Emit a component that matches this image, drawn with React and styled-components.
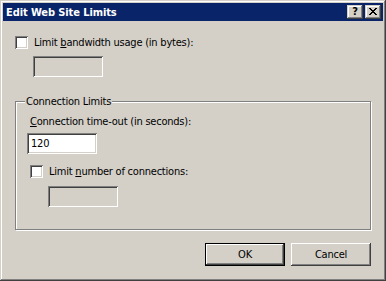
import React from 'react';
import styled, { createGlobalStyle } from 'styled-components';

const FACE = '#D4D0C8';

const Global = createGlobalStyle`
  html, body { margin: 0; padding: 0; background: ${FACE}; overflow: hidden; }
`;

const Window = styled.div`
  width: 386px;
  height: 281px;
  box-sizing: border-box;
  padding: 3px;
  background: ${FACE};
  box-shadow: inset -1px -1px #404040, inset 1px 1px ${FACE}, inset -2px -2px #808080, inset 2px 2px #ffffff;
  display: flex;
  flex-direction: column;
  font-family: "DejaVu Sans Condensed", "DejaVu Sans", sans-serif;
  font-size: 11px;
  letter-spacing: -0.22px;
  color: #000;
`;

const TitleBar = styled.div`
  height: 18px;
  background: #0A246A;
  display: flex;
  align-items: center;
  padding: 0 2px;
  color: #fff;
  font-weight: bold;
`;

const Title = styled.div`
  flex: 1;
  padding-left: 1px;
  line-height: 13px;
  letter-spacing: -0.1px;
`;

const CaptionButtons = styled.div`
  display: flex;
  gap: 2px;
`;

const CaptionButton = styled.div`
  width: 16px;
  height: 14px;
  box-sizing: border-box;
  background: ${FACE};
  box-shadow: inset -1px -1px #404040, inset 1px 1px ${FACE}, inset -2px -2px #808080, inset 2px 2px #ffffff;
  display: flex;
  align-items: center;
  justify-content: center;
  color: #000;
  font-weight: bold;
  font-size: 11px;
  line-height: 11px;
  letter-spacing: 0;
  padding-bottom: 1px;
`;

const Content = styled.div`
  flex: 1;
  display: flex;
  flex-direction: column;
  padding: 15px 12px 0 12px;
`;

const CheckRow = styled.div`
  display: flex;
  align-items: center;
  height: 13px;
  gap: 6px;
  margin-left: ${p => p.$left || 0}px;
  margin-top: ${p => p.$top || 0}px;
`;

const Check = styled.span`
  width: 13px;
  height: 13px;
  flex: none;
  box-sizing: border-box;
  background: #fff;
  box-shadow: inset 1px 1px #808080, inset -1px -1px #ffffff, inset 2px 2px #404040, inset -2px -2px ${FACE};
`;

const Label = styled.span`
  line-height: 13px;
  white-space: nowrap;
`;

const FieldLabel = styled.div`
  line-height: 13px;
  height: 13px;
  margin-left: ${p => p.$left || 0}px;
  margin-top: ${p => p.$top || 0}px;
`;

const TextBox = styled.div`
  width: 70px;
  height: 21px;
  box-sizing: border-box;
  background: ${p => (p.$disabled ? FACE : '#fff')};
  box-shadow: inset 1px 1px #808080, inset -1px -1px #ffffff, inset 2px 2px #404040, inset -2px -2px ${FACE};
  display: flex;
  align-items: center;
  padding-left: 4px;
  margin-left: ${p => p.$left || 0}px;
  margin-top: ${p => p.$top || 0}px;
`;

const Group = styled.div`
  position: relative;
  margin-top: 24px;
  height: 129px;
  box-sizing: border-box;
  border: 1px solid #808080;
  box-shadow: 1px 1px 0 #ffffff, inset 1px 1px 0 #ffffff;
  display: flex;
  flex-direction: column;
  align-items: flex-start;
`;

const Legend = styled.span`
  position: absolute;
  top: -7px;
  left: 9px;
  padding: 0 1px;
  background: ${FACE};
  line-height: 13px;
`;

const ButtonRow = styled.div`
  display: flex;
  justify-content: flex-end;
  gap: 6px;
  margin-top: 13px;
`;

const Button = styled.button`
  width: 80px;
  height: 23px;
  box-sizing: border-box;
  border: none;
  margin: 0;
  padding: 0;
  background: ${FACE};
  font: inherit;
  letter-spacing: inherit;
  color: #000;
  box-shadow: ${p =>
    p.$default
      ? `inset -1px -1px #000, inset 1px 1px #000, inset -2px -2px #404040, inset 2px 2px #ffffff, inset -3px -3px #808080`
      : `inset -1px -1px #404040, inset 1px 1px #ffffff, inset -2px -2px #808080`};
`;

const CloseIcon = () => (
  <svg width="8" height="7" viewBox="0 0 8 7" shapeRendering="crispEdges">
    <g fill="#000">
      <rect x="0" y="0" width="2" height="1" />
      <rect x="6" y="0" width="2" height="1" />
      <rect x="1" y="1" width="2" height="1" />
      <rect x="5" y="1" width="2" height="1" />
      <rect x="2" y="2" width="4" height="1" />
      <rect x="3" y="3" width="2" height="1" />
      <rect x="2" y="4" width="4" height="1" />
      <rect x="1" y="5" width="2" height="1" />
      <rect x="5" y="5" width="2" height="1" />
      <rect x="0" y="6" width="2" height="1" />
      <rect x="6" y="6" width="2" height="1" />
    </g>
  </svg>
);

export default function App() {
  return (
    <>
      <Global />
      <Window>
        <TitleBar>
          <Title>Edit Web Site Limits</Title>
          <CaptionButtons>
            <CaptionButton>?</CaptionButton>
            <CaptionButton><CloseIcon /></CaptionButton>
          </CaptionButtons>
        </TitleBar>
        <Content>
          <CheckRow>
            <Check />
            <Label>Limit <u>b</u>andwidth usage (in bytes):</Label>
          </CheckRow>
          <TextBox $disabled $left={18} $top={7} />
          <Group>
            <Legend>Connection Limits</Legend>
            <FieldLabel $left={14} $top={13}><u>C</u>onnection time-out (in seconds):</FieldLabel>
            <TextBox $left={11} $top={5}>120</TextBox>
            <CheckRow $left={14} $top={11}>
              <Check />
              <Label>Limit <u>n</u>umber of connections:</Label>
            </CheckRow>
            <TextBox $disabled $left={32} $top={8} />
          </Group>
          <ButtonRow>
            <Button $default>OK</Button>
            <Button>Cancel</Button>
          </ButtonRow>
        </Content>
      </Window>
    </>
  );
}
